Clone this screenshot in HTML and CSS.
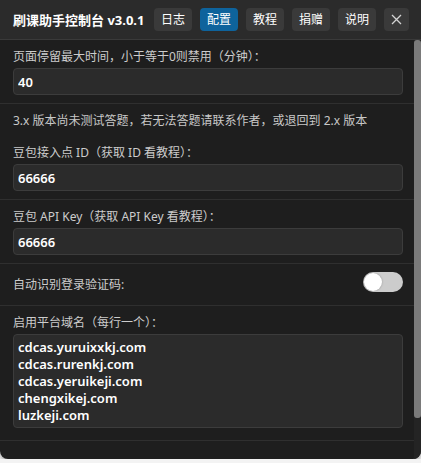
FILE: index.html
```html
<!DOCTYPE html>
<html lang="zh-CN">
<head>
<meta charset="utf-8">
<title>刷课助手控制台</title>
<link rel="stylesheet" href="styles.css">
</head>
<body>
<div class="panel">
  <div class="header">
    <div class="title">刷课助手控制台 v3.0.1</div>
    <div class="tabs">
      <button class="tab">日志</button>
      <button class="tab active">配置</button>
      <button class="tab">教程</button>
      <button class="tab">捐赠</button>
      <button class="tab">说明</button>
      <button class="tab close" aria-label="关闭"><svg width="11" height="11" viewBox="0 0 11 11"><path d="M1 1L10 10M10 1L1 10" stroke="#d4d4d4" stroke-width="1.3" fill="none"/></svg></button>
    </div>
  </div>
  <div class="body">
    <div class="content">
      <div class="section">
        <label class="label">页面停留最大时间，小于等于0则禁用（分钟）：</label>
        <input class="input" type="text" value="40">
      </div>
      <div class="section">
        <div class="note">3.x 版本尚未测试答题，若无法答题请联系作者，或退回到 2.x 版本</div>
        <label class="label">豆包接入点 ID（获取 ID 看教程）：</label>
        <input class="input" type="text" value="66666">
      </div>
      <div class="section">
        <label class="label">豆包 API Key（获取 API Key 看教程）：</label>
        <input class="input" type="text" value="66666">
      </div>
      <div class="section row">
        <span class="label row-label">自动识别登录验证码:</span>
        <span class="toggle"><span class="knob"></span></span>
      </div>
      <div class="section last">
        <label class="label">启用平台域名（每行一个）：</label>
        <textarea class="textarea">cdcas.yuruixxkj.com
cdcas.rurenkj.com
cdcas.yeruikeji.com
chengxikej.com
luzkeji.com</textarea>
      </div>
    </div>
    <div class="scrollbar"><div class="thumb"></div></div>
  </div>
</div>
</body>
</html>
```
FILE: styles.css
```css
html, body {
  margin: 0;
  padding: 0;
  background: #f3f3f3;
}
body {
  font-family: "Segoe UI", "Noto Sans", "Noto Sans CJK SC", sans-serif;
  font-size: 12px;
  color: #cccccc;
}
.panel {
  width: 421px;
  height: 459px;
  background: #1e1e1e;
  border-radius: 0 0 8px 8px;
  box-shadow: 0 2px 5px rgba(0,0,0,0.35);
  display: flex;
  flex-direction: column;
  overflow: hidden;
}
.header {
  height: 39px;
  flex: none;
  background: #2b2b2b;
  border-bottom: 1px solid #3a3a3a;
  display: flex;
  align-items: center;
  justify-content: space-between;
  padding: 0 12px 0 13px;
}
.title {
  font-size: 13px;
  font-weight: 700;
  color: #ffffff;
  white-space: nowrap;
}
.tabs {
  display: flex;
  gap: 8px;
}
.tab {
  width: 38px;
  height: 23px;
  border: none;
  border-radius: 4px;
  background: #3a3a3a;
  color: #ffffff;
  font-family: "Segoe UI", "Noto Sans", "Noto Sans CJK SC", sans-serif;
  font-size: 12px;
  padding: 0;
  line-height: 23px;
  display: flex;
  align-items: center;
  justify-content: center;
}
.tab.active {
  background: #0e639c;
}
.tab.close {
  width: 25px;
}
.body {
  flex: 1;
  min-height: 0;
  display: flex;
}
.content {
  flex: 1;
  min-width: 0;
  overflow: hidden;
}
.scrollbar {
  width: 7px;
  flex: none;
  background: #242424;
  display: flex;
  flex-direction: column;
}
.thumb {
  height: 378px;
  background: #7a7a7a;
  border-radius: 3px;
}
.section {
  padding: 8px 11px 8px 13px;
  border-bottom: 1px solid #2f2f2f;
  display: flex;
  flex-direction: column;
}
.label {
  display: block;
  line-height: 17px;
  margin-bottom: 3px;
  color: #cccccc;
  white-space: nowrap;
}
.note {
  line-height: 17px;
  margin-bottom: 15px;
  color: #c8c8c8;
  white-space: nowrap;
}
.input {
  box-sizing: border-box;
  width: 100%;
  height: 27px;
  margin: 0;
  padding: 0 4px;
  background: #2b2b2b;
  border: 1px solid #3c3c3c;
  border-radius: 4px;
  color: #ffffff;
  font-family: "Segoe UI", "Noto Sans", sans-serif;
  font-size: 13px;
  font-weight: 600;
  outline: none;
}
.row {
  flex-direction: row;
  justify-content: space-between;
  align-items: flex-start;
  padding-bottom: 12px;
}
.row-label {
  margin: 4px 0 0 0;
}
.toggle {
  position: relative;
  width: 40px;
  height: 20px;
  border-radius: 10px;
  background: #cccccc;
  flex: none;
}
.knob {
  position: absolute;
  left: 1px;
  top: 1px;
  width: 18px;
  height: 18px;
  border-radius: 50%;
  background: #ffffff;
  box-shadow: 0 0 2px rgba(0,0,0,0.3);
}
.section.last {
  padding-bottom: 12px;
}
.textarea {
  box-sizing: border-box;
  width: 100%;
  height: 94px;
  margin: 0;
  padding: 4px 4px;
  background: #2b2b2b;
  border: 1px solid #3c3c3c;
  border-radius: 4px;
  color: #ffffff;
  font-family: "Segoe UI", "Noto Sans", sans-serif;
  font-size: 13px;
  font-weight: 600;
  line-height: 17px;
  resize: none;
  outline: none;
  overflow: hidden;
}
```
